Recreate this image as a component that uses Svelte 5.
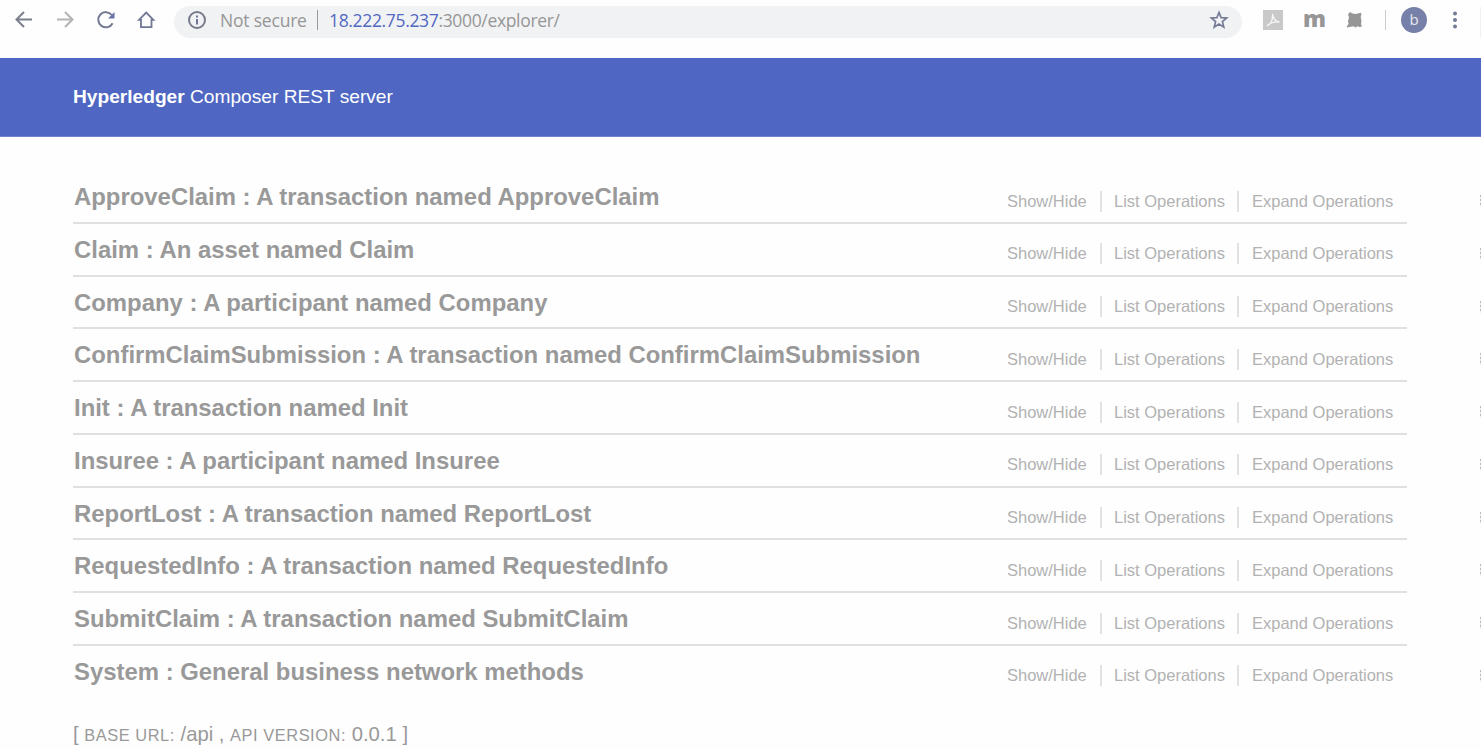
<script>
  const resources = [
    ['ApproveClaim', 'A transaction named ApproveClaim'],
    ['Claim', 'An asset named Claim'],
    ['Company', 'A participant named Company'],
    ['ConfirmClaimSubmission', 'A transaction named ConfirmClaimSubmission'],
    ['Init', 'A transaction named Init'],
    ['Insuree', 'A participant named Insuree'],
    ['ReportLost', 'A transaction named ReportLost'],
    ['RequestedInfo', 'A transaction named RequestedInfo'],
    ['SubmitClaim', 'A transaction named SubmitClaim'],
    ['System', 'General business network methods']
  ];
</script>

<div class="page">
  <div class="toolbar">
    <nav class="nav">
      <svg width="22" height="22" viewBox="0 0 22 22" fill="none" stroke="#7b7f8c" stroke-width="2"><path d="M19 10.500H4M11 3 3.500 10.500l7.500 7.500" /></svg>
      <svg width="22" height="22" viewBox="0 0 22 22" fill="none" stroke="#b4b4b4" stroke-width="2"><path d="M3 10.500h15M11 3l7.500 7.500-7.500 7.500" /></svg>
      <svg width="22" height="22" viewBox="0 0 22 22"><path d="M17.600 14.200A7.600 7.600 0 1 1 16.800 6" fill="none" stroke="#757a94" stroke-width="2" /><path d="M19.500 3v6.500h-6.500z" fill="#6874a8" /></svg>
      <svg width="22" height="22" viewBox="0 0 22 22" fill="none" stroke="#707894" stroke-width="1.800"><path d="M3 10.800 10.200 3.500l7.200 7.300H15.500V18.200H5V10.800z" /></svg>
    </nav>
    <div class="address">
      <svg class="info" width="20" height="20" viewBox="0 0 20 20"><circle cx="10" cy="10" r="8" fill="none" stroke="#777b88" stroke-width="2" /><path d="M10 5.500v2M10 9v5.500" stroke="#70779a" stroke-width="2" /></svg>
      <span class="secure">Not secure</span>
      <i class="bar"></i>
      <span class="url"><b>18.222.75.237</b>:3000/explorer/</span>
      <svg class="star" width="20" height="20" viewBox="0 0 20 20"><path d="m10 2.400 2.100 5.200 5.600.4-4.300 3.600 1.400 5.500-4.800-3-4.800 3 1.400-5.500L2.300 8l5.600-.4z" fill="none" stroke="#757b94" stroke-width="1.700" /></svg>
    </div>
    <div class="extensions">
      <svg class="pdf" width="20" height="20" viewBox="0 0 20 20"><path d="M0 0h20v20H0z" fill="#c9c9c9" /><path d="M4 16c4-2 6-6 5.500-12 1 5 3 8 7 8-5-.5-9 0-12.500 4z" fill="none" stroke="#f5f5f5" stroke-width="1.300" /></svg>
      <span class="m">m</span>
      <svg class="blob" width="16" height="16" viewBox="0 0 16 16"><path d="M3 0l2.500 1.500L9 2l4.500-1.200 1 1-.8 3.200.8 4-.5 3 1 2.500-2.500.5-2-.8-2 1.300-2-1.200L0 15.500V14l1.500-2L1 9l1-3.500L1 2.500z" fill="#969696" /></svg>
      <i class="sep"></i>
      <span class="avatar">b</span>
      <svg class="menu" width="6" height="18" viewBox="0 0 6 18" fill="#737a96"><circle cx="3" cy="2.500" r="2" /><circle cx="3" cy="9" r="2" /><circle cx="3" cy="15.500" r="2" /></svg>
      <i class="end"></i>
    </div>
  </div>

  <header><strong>Hyperledger</strong>&nbsp;<span>Composer REST server</span></header>

  <main>
    {#each resources as [name, description]}
      <section>
        <h2>{name} : {description}</h2>
        <ul>
          <li class="show">Show/Hide</li>
          <li class="list">List Operations</li>
          <li class="expand">Expand Operations</li>
        </ul>
        <i class="edge"></i>
      </section>
    {/each}
    <footer>[ <small>BASE URL:</small> /api , <small>API VERSION:</small> 0.0.1 ]</footer>
  </main>
</div>

<style>
  :global(body) { margin: 0; background: #fff; }
  .page { width: 1481px; height: 749px; overflow: hidden; font-family: "Liberation Sans", Arial, sans-serif; background: #fefefe; }
  .toolbar { height: 58px; display: flex; align-items: flex-start; }
  .nav { display: flex; width: 174px; box-sizing: border-box; padding: 9px 0 0 13px; gap: 19px; }
  .nav svg { flex: none; }
  .address { width: 1068px; height: 32px; margin-top: 6px; border-radius: 16px; background: #f1f2f4; display: flex; align-items: center; box-sizing: border-box; padding: 0 13px 4px 13px; font: 17.500px/24px "Open Sans", "Noto Sans", sans-serif; letter-spacing: -.34px; color: #969696; }
  .address svg { flex: none; }
  .secure { width: 85px; margin-left: 13px; white-space: nowrap; letter-spacing: -.2px; }
  .bar { width: 1px; height: 20px; background: #999; margin: 0 11px 0 12px; }
  .url { flex: 1; white-space: nowrap; }
  .url b { font-weight: 400; color: #5268c2; }
  .extensions { display: flex; align-items: center; height: 40px; padding-left: 21px; }
  .m { width: 22px; margin-left: 20px; font: 800 23px/24px "Open Sans", sans-serif; color: #969696; padding-bottom: 5px; }
  .blob { margin-left: 22px; }
  .sep { width: 1px; height: 20px; background: #ccc; margin-left: 22px; }
  .avatar { width: 26px; height: 26px; margin-left: 15px; border-radius: 50%; background: #7780a8; color: #e8e8ec; font: 15px/25px "Open Sans", sans-serif; text-align: center; }
  .menu { margin-left: 25px; }
  .end { width: 1px; height: 31px; margin: 4px 0 0 22px; background: #f1f1f2; }
  header { height: 79px; box-sizing: border-box; padding: 0 73px 1px; display: flex; align-items: center; background: #4f67c3; border-bottom: 1px solid #7184cf; color: #fff; font-size: 19.150px; white-space: pre; }
  main { padding: 34px 74px 0 73px; }
  section { position: relative; height: 52.780px; box-sizing: border-box; border-bottom: 2px solid #e0e0e0; display: flex; justify-content: space-between; }
  section:nth-last-of-type(1) { border-color: transparent; }
  h2 { margin: 0; padding: 12px 0 0 1px; font-size: 23.900px; line-height: 28px; font-weight: 700; color: #999; white-space: nowrap; }
  ul { display: flex; margin: 19.500px 14px 0 0; padding: 0; list-style: none; height: 21px; font-size: 16.500px; line-height: 21px; color: #b2b2b2; white-space: nowrap; }
  li { box-sizing: border-box; }
  .show { width: 93px; }
  .list { width: 137px; border-left: 2px solid #e2e2e2; padding-left: 12px; }
  .expand { width: 156px; border-left: 2px solid #e2e2e2; padding-left: 13px; }
  .edge { position: absolute; left: 1407px; top: 24px; width: 1px; height: 12px; background: repeating-linear-gradient(#bbb 0 2px, #eee 2px 4px); }
  footer { margin-top: 23px; font-size: 20.300px; line-height: 24px; color: #999; white-space: nowrap; }
  small { font-size: 16.400px; letter-spacing: .55px; }
</style>
